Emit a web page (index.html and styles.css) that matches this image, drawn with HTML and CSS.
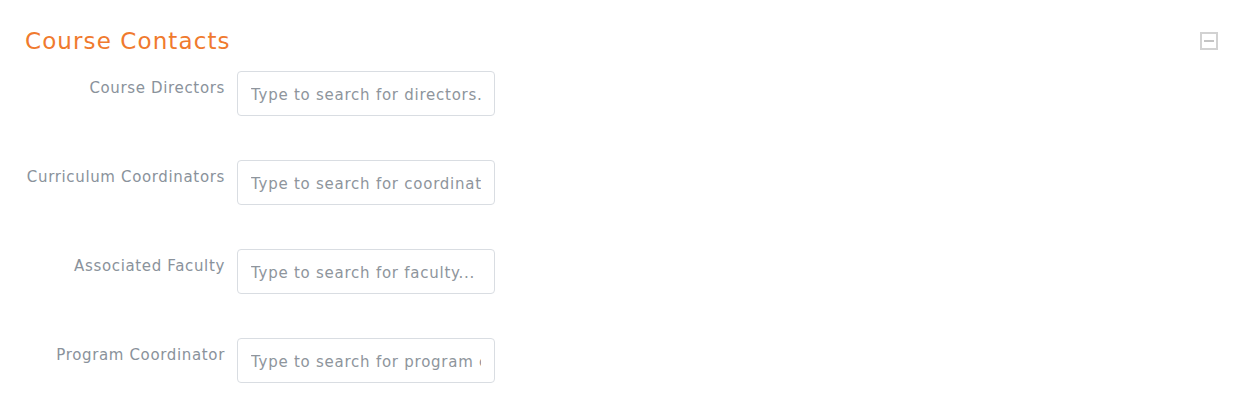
FILE: index.html
```html
<!DOCTYPE html>
<html>
<head>
<meta charset="utf-8">
<link rel="stylesheet" href="styles.css">
</head>
<body>
<section class="panel">
  <header class="panel-head">
    <h2 class="title">Course Contacts</h2>
    <button class="collapse" aria-label="Collapse">
      <svg width="18" height="18" viewBox="0 0 18 18"><rect x="1" y="1" width="16" height="16" fill="none" stroke="#d2d2d2" stroke-width="2"/><rect x="4" y="8" width="10" height="2" fill="#c4c4c4"/></svg>
    </button>
  </header>
  <div class="fields">
    <div class="row"><label class="label">Course Directors</label><input class="field" type="text" placeholder="Type to search for directors..."></div>
    <div class="row"><label class="label">Curriculum Coordinators</label><input class="field" type="text" placeholder="Type to search for coordinators..."></div>
    <div class="row"><label class="label">Associated Faculty</label><input class="field" type="text" placeholder="Type to search for faculty..."></div>
    <div class="row"><label class="label">Program Coordinator</label><input class="field" type="text" placeholder="Type to search for program coordinators..."></div>
  </div>
</section>
</body>
</html>
```
FILE: styles.css
```css
html, body { margin: 0; padding: 0; background: #fff; }
body { font-family: "DejaVu Sans", Verdana, sans-serif; }
.panel { padding: 26px 25px 0 25px; }
.panel-head { display: flex; justify-content: space-between; align-items: center; height: 30px; }
.title { margin: 0; font-weight: normal; font-size: 23px; letter-spacing: 1.1px; color: #f07a2e; line-height: 30px; }
.collapse { border: 0; background: none; padding: 0; margin-right: 0; display: flex; }
.fields { display: flex; flex-direction: column; gap: 44px; margin-top: 15px; }
.row { display: flex; align-items: flex-start; }
.label { width: 200px; text-align: right; font-size: 15px; letter-spacing: 0.65px; color: #8a929b; padding-top: 8px; padding-right: 12px; white-space: nowrap; }
.field { box-sizing: border-box; width: 258px; height: 45px; border: 1px solid #d9dde2; border-radius: 4px; padding: 2px 13px 0 13px; font-family: inherit; font-size: 15px; letter-spacing: 0.75px; color: #555; outline: none; }
.field::placeholder { color: #8e959c; }
```
